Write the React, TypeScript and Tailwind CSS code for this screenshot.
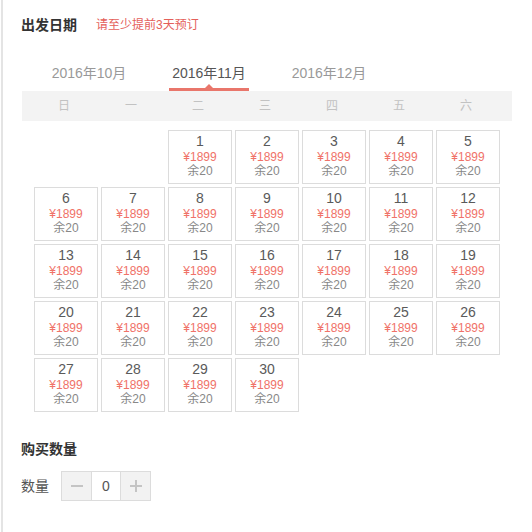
import React from "react";

const font = { fontFamily: '"Liberation Sans", Arial, "Noto Sans CJK SC", sans-serif' };

const weekdays = ["日", "一", "二", "三", "四", "五", "六"];

function DayCell({ day }: { day: number }) {
  return (
    <div className="h-[54px] border border-[#dcdcdc] bg-white pt-[2px] text-center">
      <div className="text-[14px] leading-[17px] text-[#5a5a5a]">{day}</div>
      <div className="text-[12px] leading-[14px] text-[#f07268]">¥1899</div>
      <div className="text-[12px] leading-[14px] text-[#888]">余20</div>
    </div>
  );
}

export default function App() {
  const cells: (number | null)[] = [null, null];
  for (let d = 1; d <= 30; d++) cells.push(d);

  return (
    <div className="w-[532px] h-[532px] bg-white" style={font}>
      <div className="ml-px h-full border-l-2 border-[#e4e4e4] pl-[18px] pt-[15px]">
        <div className="flex items-center">
          <span className="text-[14px] leading-[20px] font-bold text-[#333]">出发日期</span>
          <span className="ml-[19px] text-[12px] leading-[20px] text-[#e4605a]">请至少提前3天预订</span>
        </div>

        <div className="mt-[28px] flex gap-[40px] pl-[28px]">
          <div className="w-[80px] border-b-[3px] border-transparent pb-[5px] text-center text-[14px] leading-[20px] text-[#999]">
            2016年10月
          </div>
          <div className="relative w-[80px] border-b-[3px] border-[#e9766b] pb-[5px] text-center text-[14px] leading-[20px] text-[#555]">
            2016年11月
            <span className="absolute bottom-0 left-1/2 h-0 w-0 -translate-x-1/2 border-x-[4px] border-b-[4px] border-x-transparent border-b-[#e9766b]" />
          </div>
          <div className="w-[80px] border-b-[3px] border-transparent pb-[5px] text-center text-[14px] leading-[20px] text-[#999]">
            2016年12月
          </div>
        </div>

        <div className="ml-px w-[490px] h-[30px] bg-[#f3f3f3] pl-[10px]">
          <div className="grid h-full grid-cols-[repeat(7,64px)] gap-x-[3px] items-center">
            {weekdays.map((w) => (
              <div key={w} className="text-center text-[12px] text-[#c2c2c2]">
                {w}
              </div>
            ))}
          </div>
        </div>

        <div className="mt-[9px] ml-[13px] grid grid-cols-[repeat(7,64px)] gap-[3px]">
          {cells.map((c, i) => (c === null ? <div key={i} /> : <DayCell key={i} day={c} />))}
        </div>

        <div className="mt-[27px] text-[14px] leading-[20px] font-bold text-[#333]">购买数量</div>

        <div className="mt-[12px] flex items-center">
          <span className="text-[14px] leading-[20px] text-[#555]">数量</span>
          <div className="ml-[12px] flex h-[30px] border border-[#dcdcdc]">
            <div className="flex w-[29px] items-center justify-center bg-[#f2f2f2]">
              <span className="block h-[2px] w-[12px] bg-[#c4c4c4]" />
            </div>
            <div className="flex w-[30px] items-center justify-center border-x border-[#dcdcdc] bg-white text-[14px] text-[#555]">
              0
            </div>
            <div className="relative flex w-[29px] items-center justify-center bg-[#f2f2f2]">
              <span className="block h-[2px] w-[12px] bg-[#c4c4c4]" />
              <span className="absolute h-[12px] w-[2px] bg-[#c4c4c4]" />
            </div>
          </div>
        </div>
      </div>
    </div>
  );
}
